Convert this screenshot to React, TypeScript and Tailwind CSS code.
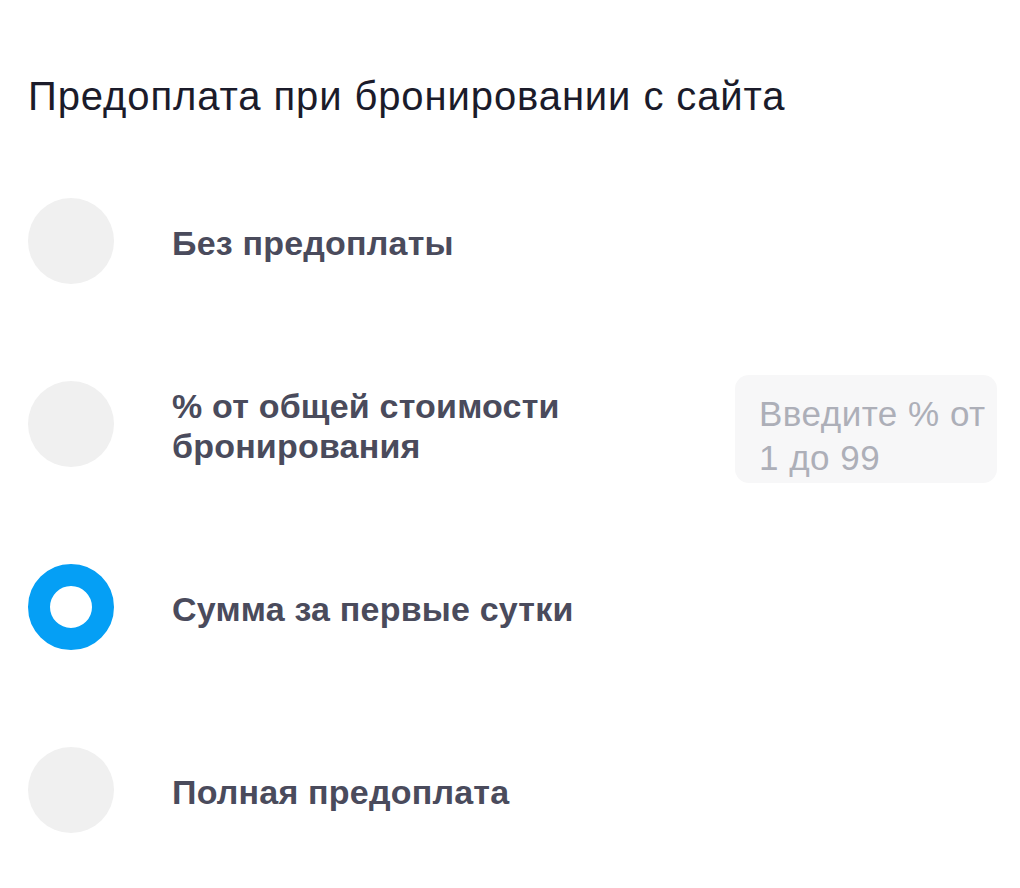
import React from 'react';

const options = [
  { id: 'none', label: 'Без предоплаты' },
  { id: 'percent', label: '% от общей стоимости бронирования', input: true },
  { id: 'first', label: 'Сумма за первые сутки' },
  { id: 'full', label: 'Полная предоплата' },
];

const App: React.FC = () => {
  const selected = 'first';

  return (
    <div className="min-h-[888px] bg-white pl-[28px] pr-[23px] pt-[72px] font-['Liberation_Sans',Arial,sans-serif]">
      {/* Title */}
      <h1 className="text-[40px] leading-[48px] font-normal tracking-[0.9px] text-[#1b1b2a]">
        Предоплата при бронировании с сайта
      </h1>

      {/* Options */}
      <div className="mt-[78px] flex flex-col gap-[97px]">
        {options.map((opt) => {
          const active = opt.id === selected;
          return (
            <div key={opt.id} className="flex h-[86px] items-center">
              {active ? (
                <span className="h-[86px] w-[86px] shrink-0 rounded-full border-[22px] border-[#059ff5] bg-white"></span>
              ) : (
                <span className="h-[86px] w-[86px] shrink-0 rounded-full bg-[#f0f0f0]"></span>
              )}
              <span className="ml-[58px] max-w-[460px] pt-[4px] text-[34px] leading-[40px] font-bold tracking-[0.2px] text-[#4a4b5c]">
                {opt.label}
              </span>
              {opt.input && (
                <div className="ml-auto mt-[10px] h-[108px] w-[262px] shrink-0 rounded-[14px] bg-[#f7f7f8] pt-[17px] pl-[24px] pr-[4px] text-[35px] leading-[44px] tracking-[0.5px] text-[#adafb8]">
                  Введите % от 1 до 99
                </div>
              )}
            </div>
          );
        })}
      </div>
    </div>
  );
};

export default App;
